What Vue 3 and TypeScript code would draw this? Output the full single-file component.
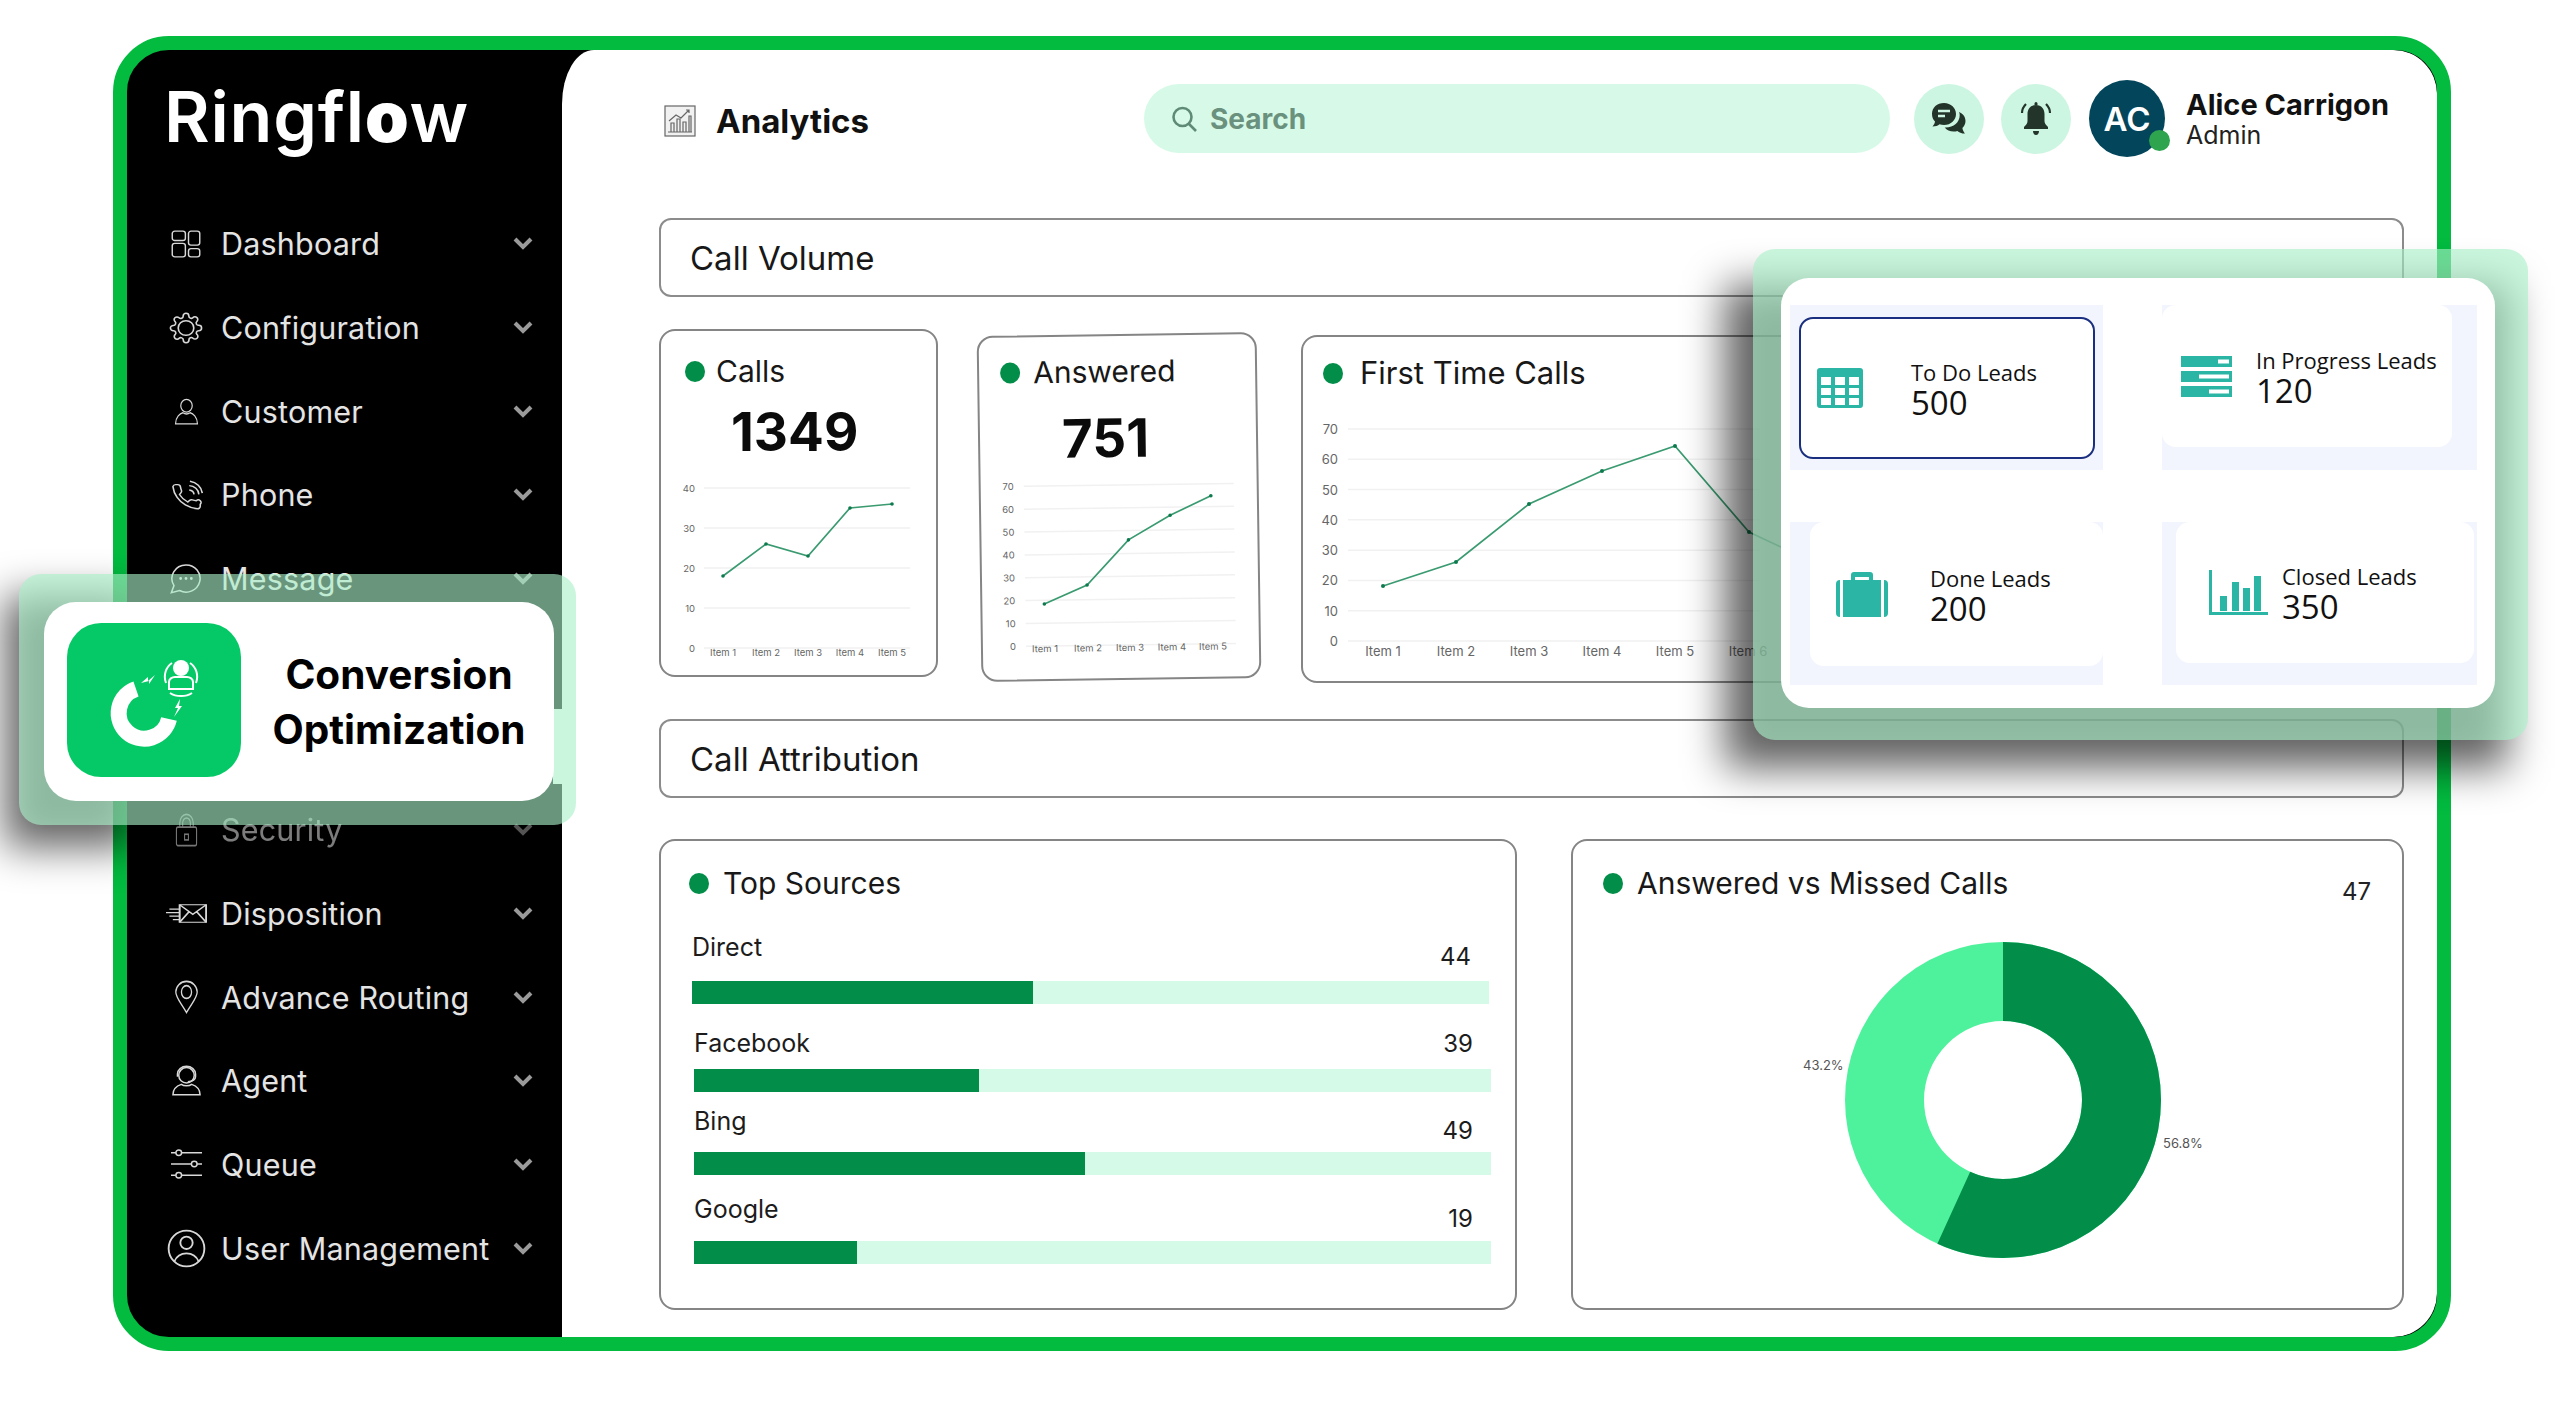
<script setup lang="ts">
// Ringflow analytics screen. Charts use page coordinates as their viewBox so points read off the design directly.
interface NavItem { label: string; icon: string; w: number; h: number; dim?: boolean; spacer?: boolean }
interface Chart { box: string; left: number; right: number; top: number; bottom: number; ticks: number[]; labelRight: number; labelY: number; fs: number; pts: number[][]; items: number[] }

const nav: NavItem[] = [
  { label: 'Dashboard', w: 30, h: 28, icon: '<rect x="1" y="1" width="10.5" height="8" rx="2"/><rect x="14" y="1" width="9" height="12" rx="2"/><rect x="1" y="11.5" width="10.5" height="11.5" rx="2"/><rect x="14" y="16" width="9" height="7" rx="2"/>' },
  { label: 'Configuration', w: 34, h: 32, icon: '<circle cx="12" cy="12" r="5.5"/><path d="M19.4 15a1.65 1.65 0 0 0 .33 1.82l.06.06a2 2 0 0 1 0 2.83 2 2 0 0 1-2.83 0l-.06-.06a1.65 1.65 0 0 0-1.82-.33 1.65 1.65 0 0 0-1 1.51V21a2 2 0 0 1-2 2 2 2 0 0 1-2-2v-.09A1.65 1.65 0 0 0 9 19.4a1.65 1.65 0 0 0-1.82.33l-.06.06a2 2 0 0 1-2.83 0 2 2 0 0 1 0-2.83l.06-.06a1.65 1.65 0 0 0 .33-1.82 1.65 1.65 0 0 0-1.51-1H3a2 2 0 0 1-2-2 2 2 0 0 1 2-2h.09A1.65 1.65 0 0 0 4.6 9a1.65 1.65 0 0 0-.33-1.82l-.06-.06a2 2 0 0 1 0-2.83 2 2 0 0 1 2.83 0l.06.06a1.65 1.65 0 0 0 1.82.33H9a1.65 1.65 0 0 0 1-1.51V3a2 2 0 0 1 2-2 2 2 0 0 1 2 2v.09a1.65 1.65 0 0 0 1 1.51 1.65 1.65 0 0 0 1.82-.33l.06-.06a2 2 0 0 1 2.83 0 2 2 0 0 1 0 2.83l-.06.06a1.65 1.65 0 0 0-.33 1.82V9a1.65 1.65 0 0 0 1.51 1H21a2 2 0 0 1 2 2 2 2 0 0 1-2 2h-.09a1.65 1.65 0 0 0-1.51 1z"/>' },
  { label: 'Customer', w: 25, h: 28, icon: '<circle cx="12" cy="7.5" r="5.5"/><path d="M1.5 23c0-6 4.5-9 7-9.5 2 1.2 5 1.2 7 0 2.500.5 7 3.500 7 9.500z"/>' },
  { label: 'Phone', w: 33, h: 30, icon: '<path d="M22 19.500v1.500a2 2 0 0 1-2.180 2 19.790 19.790 0 0 1-8.630-3.070 19.500 19.500 0 0 1-6-6 19.790 19.790 0 0 1-3.070-8.670A2 2 0 0 1 4.110 3.700h1.500a2 2 0 0 1 2 1.720 12.840 12.840 0 0 0 .7 2.810 2 2 0 0 1-.45 2.110L6.900 11.600a16 16 0 0 0 6 6l1.270-1.270a2 2 0 0 1 2.110-.45 12.840 12.840 0 0 0 2.810.7A2 2 0 0 1 22 19.500z"/><path d="M14 8a4 4 0 0 1 3.500 3.500M14 4.500a7.500 7.500 0 0 1 7 7M14.500 1a11 11 0 0 1 9 9.500"/>' },
  { label: 'Message', w: 32, h: 31, icon: '<path d="M12 1.500a10.500 10.500 0 1 1-4.800 19.800L1 23l2-5.500A10.500 10.500 0 0 1 12 1.500z"/><circle cx="8" cy="12" r=".5"/><circle cx="12" cy="12" r=".5"/><circle cx="16" cy="12" r=".5"/>' },
  { label: '', w: 0, h: 0, icon: '', spacer: true },
  { label: 'Security', w: 23, h: 34, dim: true, icon: '<rect x="1.500" y="10" width="21" height="13" rx="1.500"/><path d="M5 10V7a7 6 0 0 1 14 0v3M8 10V7a4 3.500 0 0 1 8 0v3"/><rect x="10" y="15" width="4" height="4"/>' },
  { label: 'Disposition', w: 41, h: 21, icon: '<rect x="8" y="2" width="15.500" height="20"/><path d="M8 2l7.700 11L23.500 2M8 22l5.500-12M23.500 22l-5.500-12M2 7h6M0 11h8M2 15h6M4 19h4"/>' },
  { label: 'Advance Routing', w: 27, h: 34, icon: '<path d="M12 23C7 16 2.500 12.500 2.500 8.500a9.500 7.500 0 0 1 19 0C21.500 12.500 17 16 12 23z"/><circle cx="12" cy="8.500" r="4.500"/>' },
  { label: 'Agent', w: 31, h: 31, icon: '<circle cx="12" cy="8" r="6"/><path d="M5 9V7a7 6 0 0 1 14 0v2M19 9c0 2-2 4-6 4M1.500 23c0-5 3.500-7 6.500-8 2 1.500 6 1.500 8 0 3 1 6.500 3 6.500 8z"/>' },
  { label: 'Queue', w: 31, h: 30, icon: '<circle cx="6" cy="3" r="2.200"/><path d="M0 3h3.800M8.200 3H24"/><circle cx="18" cy="12" r="2.200"/><path d="M0 12h15.800M20.200 12H24"/><circle cx="6" cy="21" r="2.200"/><path d="M0 21h3.800M8.200 21H24"/>' },
  { label: 'User Management', w: 39, h: 39, icon: '<circle cx="12" cy="12" r="11"/><circle cx="12" cy="8.500" r="3.800"/><path d="M4.500 20c1.500-3.500 4.500-5 7.500-5s6 1.500 7.500 5"/>' },
]

const charts: Record<string, Chart> = {
  calls: { box: '662 470 275 200', left: 705, right: 911, top: 488, bottom: 648, ticks: [40, 30, 20, 10, 0], labelRight: 696, labelY: 656, fs: 9.500, pts: [[724, 576], [767, 544], [809, 556], [851, 508], [893, 504]], items: [724, 767, 809, 851, 893] },
  answered: { box: '981 470 276 200', left: 1024, right: 1234, top: 486, bottom: 646, ticks: [70, 60, 50, 40, 30, 20, 10, 0], labelRight: 1014, labelY: 652, fs: 9.500, pts: [[1043, 604], [1086, 585.5], [1128, 541], [1170, 517], [1211, 498]], items: [1043, 1086, 1128, 1170, 1211] },
  first: { box: '1303 410 1098 260', left: 1348, right: 1760, top: 429, bottom: 641, ticks: [70, 60, 50, 40, 30, 20, 10, 0], labelRight: 1338, labelY: 651, fs: 13, pts: [[1383, 586], [1456, 562], [1529, 504], [1602, 471], [1675, 446], [1749, 532], [1800, 556]], items: [1383, 1456, 1529, 1602, 1675, 1748] },
}

function line(c: Chart): string {
  return c.pts.map(p => p.join(',')).join(' ')
}
function tickY(c: Chart, i: number): number {
  return c.top + (i * (c.bottom - c.top)) / (c.ticks.length - 1)
}

const sources = [
  { name: 'Direct', value: 44, pct: 42.8 },
  { name: 'Facebook', value: 39, pct: 35.7 },
  { name: 'Bing', value: 49, pct: 49.1 },
  { name: 'Google', value: 19, pct: 20.4 },
]

const donutR = 118.5
const donutC = 2 * Math.PI * donutR
const answeredDash = `${donutC * 0.568} ${donutC}`
</script>

<template>
  <div class="page">
    <div class="frame">
      <aside class="side">
        <div class="logo">Ringfl<b>o</b>w</div>
        <template v-for="n in nav" :key="n.label">
          <div v-if="n.spacer" class="nav-gap" />
          <div v-else class="nav" :class="{ dim: n.dim }">
            <span class="nav-ic">
              <svg :width="n.w" :height="n.h" viewBox="0 0 24 24" preserveAspectRatio="none" fill="none" stroke="#d8d8d8" stroke-width="1.150" v-html="n.icon" />
            </span>
            <span class="nav-t">{{ n.label }}</span>
            <svg class="chev" width="20" height="13" viewBox="0 0 20 13" fill="none" stroke="#9a9a9a" stroke-width="4"><path d="M2 2l8 8 8-8" /></svg>
          </div>
        </template>
        <span class="notch" />
      </aside>

      <main class="main">
        <header class="top">
          <div class="crumb">
            <svg width="32" height="32" viewBox="0 0 32 32" fill="none" stroke="#666" stroke-width="1.200">
              <rect x="1" y="1" width="30" height="30" fill="#f1f1f1" />
              <path d="M4 27h24M7 27V18h3v9M13 27V14h3v13M19 27V17h3v10M25 27V11h2v16M5 16l7-6 5 3 8-8M22 5h3v3" />
            </svg>
            <span>Analytics</span>
          </div>
          <div class="search">
            <svg width="27" height="26" viewBox="0 0 27 26" fill="none" stroke="#5f8a76" stroke-width="2.600"><circle cx="11.500" cy="11" r="9" /><path d="M18 18l7 7" /></svg>
            <span>Search</span>
          </div>
          <div class="round">
            <svg width="36" height="34" viewBox="0 0 36 34" fill="#23352b">
              <path d="M13 1C6 1 1 5.500 1 12c0 3 1 5.500 3 7.500-.3 2-1.200 3.500-2.500 5 3 0 5.500-1 7-2.300 1.400.5 3 .8 4.500.8 7 0 12-5 12-11S20 1 13 1z" />
              <path d="M28 10c.5 1 .7 2 .7 3 0 7.500-6 12.500-14 12.500h-1c2 2.500 5 4 9 4 1.300 0 2.500-.2 3.700-.6 1.600 1.400 4 2.600 7.600 2.600-1.500-1.700-2.300-3.500-2.600-5.500 2-2 3.100-4.300 3.100-7 0-4-2.500-7.500-6.500-9z" />
              <path d="M7 9h12M7 14h7" stroke="#cdf6e2" stroke-width="2.400" />
            </svg>
          </div>
          <div class="round bell">
            <svg width="32" height="36" viewBox="0 0 32 36" fill="#23352b">
              <path d="M16 4c-5.500 0-8.500 4-8.500 9v7c0 2.500-1.500 4-3.500 6v2h24v-2c-2-2-3.500-3.500-3.500-6v-7c0-5-3-9-8.500-9z" />
              <path d="M13 30h6c0 2-1 4-3 4s-3-2-3-4zM14.500 4V2.500a1.500 1.500 0 0 1 3 0V4z" />
              <path d="M6 3C3.500 5.500 2 8.500 2 12M26 3c2.500 2.500 4 5.500 4 9" fill="none" stroke="#23352b" stroke-width="2.200" />
            </svg>
          </div>
          <div class="avatar">AC<span class="online" /></div>
          <div class="who">
            <strong>Alice Carrigon</strong>
            <span>Admin</span>
          </div>
        </header>

        <div class="section first-sec">Call Volume</div>

        <div class="stat-row">
          <section class="card calls">
            <h3 class="ttl"><i class="dot" />Calls</h3>
            <div class="big">1349</div>
            <svg class="chart" width="275" height="200" :viewBox="charts.calls.box">
              <g v-for="(t, i) in charts.calls.ticks" :key="t">
                <line :x1="charts.calls.left" :x2="charts.calls.right" :y1="tickY(charts.calls, i)" :y2="tickY(charts.calls, i)" class="grid" />
                <text :x="charts.calls.labelRight" :y="tickY(charts.calls, i) + 3.500" text-anchor="end" class="tick" :font-size="charts.calls.fs">{{ t }}</text>
              </g>
              <text v-for="(x, i) in charts.calls.items" :key="x" :x="x" :y="charts.calls.labelY" text-anchor="middle" class="tick" :font-size="charts.calls.fs">Item {{ i + 1 }}</text>
              <polyline :points="line(charts.calls)" class="ln" />
              <circle v-for="p in charts.calls.pts" :key="p[0]" :cx="p[0]" :cy="p[1]" r="1.800" class="pt" />
            </svg>
          </section>

          <section class="card answered">
            <h3 class="ttl"><i class="dot" />Answered</h3>
            <div class="big">751</div>
            <svg class="chart" width="276" height="200" :viewBox="charts.answered.box">
              <g v-for="(t, i) in charts.answered.ticks" :key="t">
                <line :x1="charts.answered.left" :x2="charts.answered.right" :y1="tickY(charts.answered, i)" :y2="tickY(charts.answered, i)" class="grid" />
                <text :x="charts.answered.labelRight" :y="tickY(charts.answered, i) + 3.500" text-anchor="end" class="tick" :font-size="charts.answered.fs">{{ t }}</text>
              </g>
              <text v-for="(x, i) in charts.answered.items" :key="x" :x="x" :y="charts.answered.labelY" text-anchor="middle" class="tick" :font-size="charts.answered.fs">Item {{ i + 1 }}</text>
              <polyline :points="line(charts.answered)" class="ln" />
              <circle v-for="p in charts.answered.pts" :key="p[0]" :cx="p[0]" :cy="p[1]" r="1.800" class="pt" />
            </svg>
          </section>

          <section class="card firsttime">
            <h3 class="ttl"><i class="dot" />First Time Calls</h3>
            <svg class="chart" width="1096" height="260" viewBox="1303 410 1096 260">
              <g v-for="(t, i) in charts.first.ticks" :key="t">
                <line :x1="charts.first.left" :x2="charts.first.right" :y1="tickY(charts.first, i)" :y2="tickY(charts.first, i)" class="grid" />
                <text :x="charts.first.labelRight" :y="tickY(charts.first, i) + 5" text-anchor="end" class="tick" :font-size="charts.first.fs">{{ t }}</text>
              </g>
              <text v-for="(x, i) in charts.first.items" :key="x" :x="x" :y="charts.first.labelY + 5" text-anchor="middle" class="tick" :font-size="charts.first.fs">Item {{ i + 1 }}</text>
              <polyline :points="line(charts.first)" class="ln" />
              <circle v-for="p in charts.first.pts" :key="p[0]" :cx="p[0]" :cy="p[1]" r="2" class="pt" />
            </svg>
          </section>
        </div>

        <div class="section attr-sec">Call Attribution</div>

        <div class="split">
          <section class="card sources">
            <h3 class="ttl"><i class="dot" />Top Sources</h3>
            <div v-for="s in sources" :key="s.name" class="src" :class="'src-' + s.name.toLowerCase()">
              <div class="src-head">
                <span>{{ s.name }}</span>
                <em>{{ s.value }}</em>
              </div>
              <div class="track"><div class="fill" :style="{ width: s.pct + '%' }" /></div>
            </div>
          </section>

          <section class="card ratio">
            <div class="ratio-head">
              <h3 class="ttl"><i class="dot" />Answered vs Missed Calls</h3>
              <em>47</em>
            </div>
            <svg class="chart donut" width="829" height="340" viewBox="1572 930 829 340">
              <circle cx="2002" cy="1100" :r="donutR" fill="none" stroke="#4ff29c" stroke-width="79" />
              <circle cx="2002" cy="1100" :r="donutR" fill="none" stroke="#028e49" stroke-width="79" :stroke-dasharray="answeredDash" transform="rotate(-90 2002 1100)" />
              <text x="1802" y="1070" class="pct">43.2%</text>
              <text x="2162" y="1148" class="pct">56.8%</text>
            </svg>
          </section>
        </div>
      </main>
    </div>

    <!-- floating callouts -->
    <div class="float float-conv">
      <div class="conv">
        <div class="conv-ic">
          <svg width="174" height="154" viewBox="0 0 174 154" fill="none" stroke="#fff">
            <path d="M69 66A25.500 25.500 0 1 0 102 96" stroke-width="16" />
            <circle cx="114" cy="45" r="8" fill="#fff" stroke="none" />
            <path d="M102 66V59c0-3 3-5 6-5h12c3 0 6 2 6 5v7z" stroke-width="2" />
            <path d="M99 60c-3-8 0-16 6-20M129 60c3-8 0-16-6-20M103 70c6 4 16 4 22 0" stroke-width="2" />
            <path d="M74 60l7-6 0 4 7-6-6 9 0-3z" fill="#fff" stroke="none" />
            <path d="M113 76l-5 9 3 0-4 9 8-11-3 0z" fill="#fff" stroke="none" />
          </svg>
        </div>
        <div class="conv-t">Conversion<br />Optimization</div>
      </div>
    </div>

    <div class="float float-leads">
      <div class="leads">
        <div class="tile tile-todo">
          <div class="lead">
            <svg width="46" height="40" viewBox="0 0 46 40" fill="#2bb5a5">
              <path fill-rule="evenodd" d="M3 0h40a3 3 0 0 1 3 3v34a3 3 0 0 1-3 3H3a3 3 0 0 1-3-3V3a3 3 0 0 1 3-3zM4 9v8h10V9zM18 9v8h10V9zM32 9v8h10V9zM4 20v7h10v-7zM18 20v7h10v-7zM32 20v7h10v-7zM4 30v7h10v-7zM18 30v7h10v-7zM32 30v7h10v-7z" />
            </svg>
            <div class="lead-t"><span>To Do Leads</span><b>500</b></div>
          </div>
        </div>
        <div class="tile tile-prog">
          <div class="lead">
            <svg width="51" height="41" viewBox="0 0 51 41" fill="#2bb5a5">
              <path fill-rule="evenodd" d="M0 0h51v11H0zM37 3.500v4h11v-4zM0 15h51v11H0zM18 18.500v4h30v-4zM0 30h51v11H0zM28 33.500v4h20v-4z" />
            </svg>
            <div class="lead-t"><span>In Progress Leads</span><b>120</b></div>
          </div>
        </div>
        <div class="tile tile-done">
          <div class="lead">
            <svg width="52" height="45" viewBox="0 0 52 45" fill="#2bb5a5">
              <path d="M15 8V3a3 3 0 0 1 3-3h16a3 3 0 0 1 3 3v5h-4V5H19v3z" />
              <rect x="7" y="8" width="38" height="37" />
              <path d="M4 8v37a4 4 0 0 1-4-4V12a4 4 0 0 1 4-4zM48 8v37a4 4 0 0 0 4-4V12a4 4 0 0 0-4-4z" />
            </svg>
            <div class="lead-t"><span>Done Leads</span><b>200</b></div>
          </div>
        </div>
        <div class="tile tile-closed">
          <div class="lead">
            <svg width="59" height="45" viewBox="0 0 59 45" fill="#2bb5a5">
              <path d="M0 0h3v42h56v3H0zM11 26h7v15h-7zM23 12h7v29h-7zM34 18h7v23h-7zM45 6h7v35h-7z" />
            </svg>
            <div class="lead-t"><span>Closed Leads</span><b>350</b></div>
          </div>
        </div>
      </div>
    </div>
  </div>
</template>

<style scoped>
.page { position: relative; width: 2560px; height: 1404px; overflow: hidden; background: #fff; font-family: Inter, "Liberation Sans", sans-serif; color: #111; padding: 36px 0 0 113px; box-sizing: border-box; }
.frame { display: flex; width: 2338px; height: 1315px; box-sizing: border-box; border: 14.500px solid #02bb3f; border-radius: 56px; background: #000; overflow: hidden; }

.side { position: relative; width: 435px; flex: none; }
.logo { height: 152px; padding: 22px 0 0 37px; box-sizing: border-box; font-size: 70px; line-height: 90px; font-weight: 600; color: #fff; letter-spacing: .8px; }
.logo b { font-weight: 900; }
.nav { display: flex; align-items: center; height: 83.700px; padding: 0 29px 0 32px; color: #e4e4e4; }
.nav-gap { height: 167.400px; }
.nav-ic { width: 62px; display: flex; justify-content: center; flex: none; padding-right: 8px; box-sizing: border-box; }
.nav-t { flex: 1; font-size: 30.500px; letter-spacing: .2px; }
.nav.dim { opacity: .55; }
.chev { flex: none; }
.notch { position: absolute; right: 0; top: 659px; width: 9px; height: 75px; background: #fff; }

.main { flex: 1; background: #fff; border-radius: 32px / 54px 40px 40px 0; padding: 30px 33px 0 97px; border-top-right-radius: 44px; border-bottom-right-radius: 44px; border-bottom-left-radius: 0; }

.top { display: flex; align-items: center; height: 77px; }
.crumb { width: 485px; flex: none; display: flex; align-items: center; gap: 20px; padding: 4px 0 0 5px; box-sizing: border-box; font-size: 33px; font-weight: 700; }
.search { width: 746px; height: 69px; flex: none; display: flex; align-items: center; gap: 12px; padding-left: 27px; box-sizing: border-box; background: #d7fae8; border-radius: 35px; font-size: 28px; font-weight: 700; color: #6a917d; }
.round { width: 70px; height: 70px; flex: none; margin-left: 24px; display: flex; align-items: center; justify-content: center; background: #cdf6e2; border-radius: 50%; }
.round.bell { margin-left: 17px; }
.avatar { position: relative; width: 76px; height: 77px; flex: none; margin-left: 18px; display: flex; align-items: center; justify-content: center; border-radius: 50%; background: #03465c; color: #fff; font-size: 33px; font-weight: 600; }
.online { position: absolute; right: -5px; bottom: 6px; width: 21px; height: 21px; border-radius: 50%; background: #2ea44f; }
.who { margin-left: 21px; display: flex; flex-direction: column; }
.who strong { font-size: 29px; line-height: 34px; font-weight: 700; }
.who span { font-size: 25px; line-height: 27px; color: #222; }

.section { height: 79px; box-sizing: border-box; display: flex; align-items: center; padding-left: 29px; border: 2.500px solid #8c8c8c; border-radius: 12px; font-size: 33px; color: #181818; }
.first-sec { margin-top: 61px; }
.attr-sec { margin-top: 36px; height: 79px; }

.stat-row { display: flex; align-items: flex-start; margin-top: 32px; height: 354px; }
.card { box-sizing: border-box; border: 2.500px solid #858585; border-radius: 16px; background: #fff; flex: none; }
.ttl { display: flex; align-items: center; margin: 0; font-size: 30px; line-height: 40px; font-weight: 400; color: #181818; }
.dot { width: 20px; height: 21px; border-radius: 50%; background: #028e49; flex: none; margin-right: 11px; }
.big { font-size: 53px; line-height: 60px; font-weight: 700; color: #0b0b0b; }
.chart { display: block; }
.grid { stroke: #f1f1f1; stroke-width: 1.500; }
.tick { fill: #666; font-family: Inter, sans-serif; }
.ln { fill: none; stroke: #3a9a70; stroke-width: 1.700; }
.pt { fill: #0c7a4d; }

.calls { width: 279px; height: 348px; padding-top: 20px; }
.calls .ttl { padding-left: 24px; }
.calls .big { margin: 11px 0 8px 70px; }
.answered { width: 280px; height: 346px; margin: 5px 0 0 41px; padding-top: 15px; transform: rotate(-.8deg); }
.answered .ttl { padding-left: 21px; }
.answered .dot { margin-right: 13px; }
.answered .big { margin: 17px 0 1px 82px; }
.firsttime { width: 1101px; height: 348px; margin: 6px 0 0 42px; padding-top: 16px; }
.firsttime .ttl { padding-left: 20px; font-size: 31px; }
.firsttime .dot { margin-right: 17px; }
.firsttime .chart { margin-top: 17px; }

.split { display: flex; justify-content: space-between; margin-top: 41px; }
.sources { width: 858px; height: 471px; padding-top: 22px; }
.sources .ttl { padding-left: 28px; }
.sources .dot { margin-right: 14px; }
.src { padding-left: 33px; }
.src-head { display: flex; justify-content: space-between; align-items: flex-start; width: 797px; box-sizing: border-box; padding-right: 18px; font-size: 25px; line-height: 30px; color: #1c1c1c; }
.src-head em { font-style: normal; font-size: 24px; padding-top: 10px; }
.track { height: 23px; width: 797px; background: #d5fae8; }
.fill { height: 100%; background: #028e49; }
.src-direct { margin-top: 29px; margin-left: -2px; }
.src-direct .src-head { height: 49px; }
.src-facebook { margin-top: 24px; }
.src-facebook .src-head { height: 41px; }
.src-facebook .src-head em { padding-top: 1px; }
.src-bing { margin-top: 14px; }
.src-bing .src-head { height: 46px; }
.src-google { margin-top: 19px; }
.src-google .src-head { height: 47px; }

.ratio { width: 833px; height: 471px; padding-top: 22px; }
.ratio-head { display: flex; justify-content: space-between; align-items: flex-start; height: 43px; padding: 0 31px 0 30px; }
.ratio-head .dot { margin-right: 14px; }
.ratio-head em { font-style: normal; font-size: 24px; padding-top: 14px; color: #222; }
.donut { margin-top: 24px; }
.pct { fill: #555; font-size: 13px; font-family: Inter, sans-serif; }

.float { position: absolute; z-index: 5; box-sizing: border-box; }
.float::before { content: ""; position: absolute; z-index: -2; background: rgba(0, 0, 0, .62); filter: blur(20px); }
.float::after { content: ""; position: absolute; inset: 0; z-index: -1; background: rgba(170, 240, 200, .62); border-radius: 22px; }

.float-conv { left: 19px; top: 574px; width: 557px; height: 251px; padding: 28px 22px 24px 25px; }
.float-conv::before { left: -14px; right: 440px; top: 22px; bottom: -22px; }
.conv { position: relative; height: 199px; display: flex; align-items: flex-start; background: #fff; border-radius: 32px; padding: 21px 0 0 23px; box-sizing: border-box; }
.conv-ic { width: 174px; height: 154px; flex: none; background: #05c966; border-radius: 34px; }
.conv-t { flex: 1; text-align: center; font-size: 40.500px; line-height: 55px; font-weight: 700; color: #000; padding: 24px 0 0 3px; }

.float-leads { left: 1753px; top: 249px; width: 775px; height: 491px; padding: 29px 33px 32px 28px; }
.float-leads::before { left: -28px; right: 20px; top: 36px; bottom: -28px; }
.leads { position: relative; height: 430px; box-sizing: border-box; background: #fff; border-radius: 28px; padding: 27px 18px 0 9px; display: grid; grid-template-columns: 313px 315px; grid-template-rows: 165px 163px; column-gap: 59px; row-gap: 52px; }
.tile { display: flex; background: #f2f5fd; }
.lead { flex: 1; display: flex; align-items: center; background: #fff; border-radius: 14px; box-sizing: border-box; }
.lead svg { flex: none; }
.lead-t { display: flex; flex-direction: column; padding-top: 2px; font-family: "Open Sans", sans-serif; color: #111; }
.lead-t span { font-size: 22px; line-height: 27px; }
.lead-t b { font-size: 33px; line-height: 34px; font-weight: 400; }
.tile-todo { padding: 12px 8px 11px 9px; }
.tile-todo .lead { border: 2.500px solid #1a2f80; padding-left: 16px; }
.tile-todo .lead svg { margin-right: 48px; }
.tile-prog { padding: 0 25px 23px 0; }
.tile-prog .lead { padding-left: 19px; }
.tile-prog .lead svg { margin-right: 24px; }
.tile-done { padding: 0 0 19px 20px; }
.tile-done .lead { padding-left: 26px; }
.tile-done .lead svg { margin-right: 42px; }
.tile-closed { padding: 0 3px 22px 14px; }
.tile-closed .lead { padding-left: 33px; }
.tile-closed .lead svg { margin-right: 14px; }
</style>

<style>
html, body { background: #fff; }
</style>
